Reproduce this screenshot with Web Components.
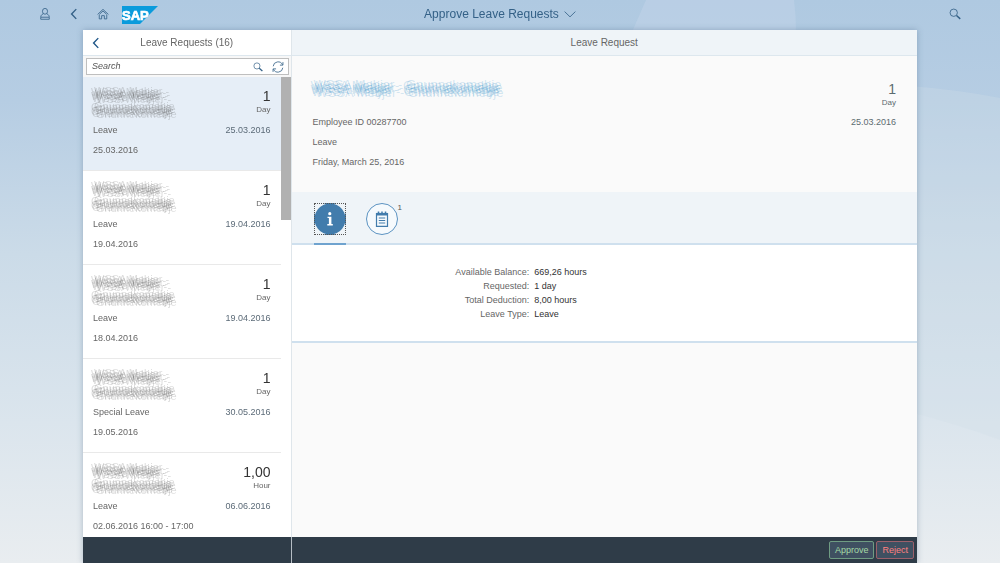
<!DOCTYPE html>
<html lang="en">
<head>
<meta charset="utf-8">
<meta name="viewport" content="width=device-width, initial-scale=1">
<title>Approve Leave Requests</title>
<style>
  html, body { height: 100%; margin: 0; }
  body { font-family: "Liberation Sans", Arial, sans-serif; font-size: 9px; line-height: 12px; color: #666; }
</style>
</head>
<body>
<leave-app></leave-app>
<script>
const define = (name, html, setup) => {
  const template = document.createElement('template');
  template.innerHTML = html;
  customElements.define(name, class extends HTMLElement {
    constructor() {
      super();
      this.attachShadow({ mode: 'open' }).append(template.content.cloneNode(true));
    }
    connectedCallback() { if (setup) setup(this, this.shadowRoot); }
  });
};

const ICONS = {
  user: '<ellipse cx="8" cy="4.400" rx="3.400" ry="3.900"/><path d="M5.600 7.600C3.400 8.800 2.300 10.200 2.300 12.500V15h11.400v-2.500c0-2.300-1.100-3.700-3.300-4.900M2.500 12.300h11"/>',
  back: '<path d="M11 1.500 4.800 8l6.200 6.500" stroke-width="1.900"/>',
  home: '<path d="M.8 8.600 8 1.800l7.200 6.800M3 9v5.500h3.200v-4.300h3.600v4.300H13V9M3.200 8.400 8 4l4.800 4.400"/>',
  down: '<path d="M.8 4.800 8 11.800l7.200-7"/>',
  search: '<circle cx="6.300" cy="6.300" r="4.900"/><path d="m10 10 5 4.500" stroke-width="2"/>',
  refresh: '<path d="M1.600 7A6.500 6.500 0 0 1 14 5M14.400 9A6.500 6.500 0 0 1 2 11"/><path d="M14.600 1.500v4h-4M1.400 14.500v-4h4"/>',
  info: '<g fill="currentColor" stroke="none"><circle cx="7.800" cy="2.700" r="1.600"/><path d="M5.500 5.700h3.900v7.400h1.400v1.300H5.300v-1.300h1.600V7H5.500z"/></g>',
  notes: '<path d="M2.500 2.500h11v12.800h-11z" stroke-width="1.200"/><path d="M2.500 3.200h11" stroke-width="2.600"/><path d="M4.500.5v2M8 .5v2M11.500.5v2" stroke-width="1.500"/><path d="M4.800 7h6.400M4.800 9.500h6.400M4.800 12h6.400" stroke-width="1.200"/>'
};

define('ui-icon', `
  <style>
    :host { display: inline-block; width: 12px; height: 12px; flex: none; }
    svg { display: block; width: 100%; height: 100%; fill: none; stroke: currentColor; stroke-width: 1.1; overflow: visible; }
  </style>
  <svg viewBox="0 0 16 16" aria-hidden="true"></svg>`,
  (el, root) => { root.querySelector('svg').innerHTML = ICONS[el.getAttribute('name')]; });

define('brand-logo', `
  <style>
    :host { display: block; }
    svg { display: block; width: 36px; height: 18px; }
    text { font: bold 13px "Liberation Sans", Arial, sans-serif; fill: #fff; stroke: #fff; stroke-width: .7; }
  </style>
  <svg viewBox="0 0 36 18" role="img" aria-label="SAP">
    <path d="M0 0h36L18 18H0z" fill="#0a9bdc"/>
    <text x="0" y="14">SAP</text>
  </svg>`);

define('page-backdrop', `
  <style>
    :host { position: fixed; inset: 0; z-index: -1; }
    svg { display: block; width: 100%; height: 100%; }
  </style>
  <svg viewBox="0 0 1000 563" preserveAspectRatio="none" aria-hidden="true">
    <defs><linearGradient id="sky" x2="0" y2="1">
      <stop stop-color="#afc9e1"/><stop offset=".18" stop-color="#b6cde3"/><stop offset=".45" stop-color="#cbdbe8"/>
      <stop offset=".75" stop-color="#dbe5ed"/><stop offset="1" stop-color="#e9edf0"/>
    </linearGradient></defs>
    <path d="M0 0h1000v563H0z" fill="url(#sky)"/>
    <path d="M646 0h148q2 16 2 32H632z" fill="#bfd2e8" opacity=".6"/>
    <path d="M910 86q50 4 90 12v342q-40-15-90-28z" fill="#d0dfe9" opacity=".3"/>
  </svg>`);

define('shell-header', `
  <style>
    :host { display: grid; grid-template-columns: 1fr auto 1fr; align-items: center; box-sizing: border-box; height: 30px; padding-bottom: 2px; flex: none; color: #346187; }
    .left { display: flex; align-items: center; gap: 17px; padding-left: 39px; }
    button { border: 0; padding: 0; background: none; color: inherit; font: inherit; display: flex; align-items: center; }
    h1 { margin: 0; font-weight: 400; font-size: 12px; line-height: 16px; }
    h1 button { gap: 5px; }
    .right { justify-self: end; padding-right: 39px; }
    a { display: block; margin: 2px 0 0 -4px; }
  </style>
  <nav class="left">
    <button aria-label="User"><ui-icon name="user"></ui-icon></button>
    <button aria-label="Back"><ui-icon name="back"></ui-icon></button>
    <button aria-label="Home"><ui-icon name="home"></ui-icon></button>
    <a href="#" aria-label="SAP"><brand-logo></brand-logo></a>
  </nav>
  <h1><button>Approve Leave Requests <ui-icon name="down"></ui-icon></button></h1>
  <div class="right"><button aria-label="Search"><ui-icon name="search"></ui-icon></button></div>`);

/* A name made unreadable by several overlapping ghost copies. */
define('masked-name', `
  <style>
    :host { display: block; white-space: nowrap; color: rgba(85, 85, 85, .2); font-size: 11px; line-height: 15px;
      text-shadow: -2px -3px currentColor, 2px -1px currentColor, -1px 3px currentColor, 3px 4px currentColor, 1px -4px currentColor, -2px 1px currentColor; }
    :host([large]) { color: rgba(45, 140, 200, .2); font-size: 13px; line-height: 16px; }
  </style>
  <slot></slot>`);

define('leave-item', `
  <style>
    :host { display: block; box-sizing: border-box; height: 94px; padding: 11px 10px 0; border-bottom: 1px solid #e9e9e9; flex: none; }
    :host([selected]) { background: #e6eef7; }
    .top, .row { display: flex; justify-content: space-between; }
    .top { height: 36px; }
    .num { text-align: right; color: #333; font-size: 14px; line-height: 16px; }
    .unit { display: block; font-size: 8px; line-height: 12px; color: #666; }
    .row { line-height: 12px; }
    .when { margin-top: 8px; }
    ::slotted([slot=date]) { color: #5c6b78; }
  </style>
  <div class="top">
    <div><masked-name>WSSA Mebjer -</masked-name><masked-name>Gnunnekomebje</masked-name></div>
    <div class="num"><slot name="amount"></slot><span class="unit"><slot name="unit"></slot></span></div>
  </div>
  <div class="row"><slot name="type"></slot><slot name="date"></slot></div>
  <div class="when"><slot name="when"></slot></div>`);

define('pane-header', `
  <style>
    :host { display: grid; grid-template-columns: 22px 1fr 22px; align-items: center; box-sizing: border-box; height: 26px;
      flex: none; border-bottom: 1px solid #dde7ee; background: var(--bar, #fff); }
    h2 { margin: 0; grid-column: 2; text-align: center; font-size: 10px; line-height: 14px; font-weight: 400; color: #666; }
  </style>
  <slot name="lead"></slot><h2><slot></slot></h2>`);

define('search-field', `
  <style>
    :host { display: block; padding: 2px 2px 2px 3px; background: #f7f7f7; flex: none; }
    form { display: flex; align-items: center; gap: 9px; box-sizing: border-box; height: 17px; padding: 0 4px 0 5px; border: 1px solid #bfbfbf; background: #fff; color: #346187; }
    input { flex: 1; min-width: 0; border: 0; padding: 0; outline: 0; background: none; font: italic 9px/13px "Liberation Sans", Arial, sans-serif; color: #333; }
    input::placeholder { color: #555; opacity: 1; }
    button { display: flex; border: 0; padding: 0; background: none; color: inherit; }
    .find ui-icon { width: 10px; height: 10px; }
  </style>
  <form role="search">
    <input type="text" placeholder="Search" aria-label="Search">
    <button class="find" type="button" aria-label="Search"><ui-icon name="search"></ui-icon></button>
    <button type="button" aria-label="Refresh"><ui-icon name="refresh"></ui-icon></button>
  </form>`);

const requests = [
  ['1', 'Day', 'Leave', '25.03.2016', '25.03.2016'],
  ['1', 'Day', 'Leave', '19.04.2016', '19.04.2016'],
  ['1', 'Day', 'Leave', '19.04.2016', '18.04.2016'],
  ['1', 'Day', 'Special Leave', '30.05.2016', '19.05.2016'],
  ['1,00', 'Hour', 'Leave', '06.06.2016', '02.06.2016 16:00 - 17:00']
];

define('request-list', `
  <style>
    :host { display: flex; flex-direction: column; min-height: 0; background: #fff; border-right: 1px solid #dfe6eb; }
    .scroll { display: grid; grid-template-columns: 1fr 10px; flex: 1; min-height: 0; overflow: hidden; }
    .items { display: flex; flex-direction: column; min-width: 0; min-height: 0; overflow: hidden; }
    .thumb { height: 31%; background: #b1b1b1; }
    button { display: flex; border: 0; padding: 0 0 0 7px; background: none; color: #1f5688; }
  </style>
  <pane-header><button slot="lead" aria-label="Back"><ui-icon name="back"></ui-icon></button>Leave Requests (16)</pane-header>
  <search-field></search-field>
  <div class="scroll"><div class="items">${requests.map(([n, u, t, d, w], i) => `
    <leave-item ${i ? '' : 'selected'}><span slot="amount">${n}</span><span slot="unit">${u}</span><span slot="type">${t}</span><span slot="date">${d}</span><span slot="when">${w}</span></leave-item>`).join('')}
  </div><div class="thumb"></div></div>`);

define('object-header', `
  <style>
    :host { display: flex; justify-content: space-between; box-sizing: border-box; height: 136px; padding: 25px 21px 0; flex: none; }
    a { display: block; text-decoration: none; height: 35px; }
    p { margin: 0 0 8px; }
    .right { text-align: right; color: #5c6b70; }
    .num { font-size: 14px; line-height: 16px; }
    .unit { font-size: 8px; line-height: 12px; margin-bottom: 7px; }
  </style>
  <div>
    <a href="#"><masked-name large>WSSA Mebjer - Gnunnekomebje</masked-name></a>
    <p>Employee ID 00287700</p><p>Leave</p><p>Friday, March 25, 2016</p>
  </div>
  <div class="right"><div class="num">1</div><div class="unit">Day</div><div>25.03.2016</div></div>`);

define('icon-tabs', `
  <style>
    :host { display: flex; gap: 20px; box-sizing: border-box; height: 53px; padding: 11px 22px 0; flex: none; background: #eff4f8; border-bottom: 2px solid #cfe0ee; }
    button { position: relative; width: 32px; height: 32px; box-sizing: border-box; padding: 0; border: 1px solid #5c93c2; border-radius: 50%; background: #f6fafd; color: #427cac; display: grid; place-items: center; }
    .tab { height: 40px; }
    .on { border-bottom: 2px solid #6fa3cf; }
    .on button { border: 1px dotted #555; border-radius: 0; background: radial-gradient(circle at center, #427cac 15px, transparent 16px); color: #fff; }
    .count { position: absolute; left: 31px; top: 0; font-size: 8px; line-height: 8px; color: #555; }
    ui-icon { width: 16px; height: 16px; }
  </style>
  <div class="tab on"><button role="tab" aria-selected="true" aria-label="Information"><ui-icon name="info"></ui-icon></button></div>
  <div class="tab"><button role="tab" aria-selected="false" aria-label="Notes"><ui-icon name="notes"></ui-icon><span class="count">1</span></button></div>`);

define('leave-facts', `
  <style>
    :host { display: block; box-sizing: border-box; height: 98px; padding: 20px 0 0; flex: none; background: #fff; border-bottom: 2px solid #cfe0ee; }
    dl { display: grid; grid-template-columns: 38% 1fr; column-gap: 5px; margin: 0; line-height: 14px; }
    dt { text-align: right; } dd { margin: 0; color: #333; }
  </style>
  <dl>
    <dt>Available Balance:</dt><dd>669,26 hours</dd>
    <dt>Requested:</dt><dd>1 day</dd>
    <dt>Total Deduction:</dt><dd>8,00 hours</dd>
    <dt>Leave Type:</dt><dd>Leave</dd>
  </dl>`);

define('detail-pane', `
  <style>
    :host { display: flex; flex-direction: column; min-width: 0; background: #fafafa; --bar: #eff4f8; }
  </style>
  <pane-header>Leave Request</pane-header>
  <object-header></object-header>
  <icon-tabs></icon-tabs>
  <leave-facts></leave-facts>`);

define('action-bar', `
  <style>
    :host { display: flex; align-items: center; justify-content: flex-end; gap: 2px; box-sizing: border-box; padding-right: 3px; background: #2f3c48; }
    button { box-sizing: border-box; height: 18px; padding: 0 5px; border: 1px solid; border-radius: 2px; background: #3f5061; font: 9px/14px "Liberation Sans", Arial, sans-serif; }
    .yes { color: #a5dba5; border-color: #6f9c83; } .no { color: #ff8080; border-color: #9c606b; }
  </style>
  <button class="yes">Approve</button><button class="no">Reject</button>`);

define('leave-app', `
  <style>
    :host { display: flex; flex-direction: column; height: 100vh; }
    main { flex: 1; min-height: 0; width: 83.4%; margin: 0 auto; display: grid; grid-template-columns: 25% 1fr; grid-template-rows: minmax(0, 1fr) 26px;
      box-shadow: 0 0 6px rgba(60, 90, 120, .35); }
    .foot { background: #2f3c48; border-right: 1px solid #b5bdc4; }
  </style>
  <page-backdrop></page-backdrop>
  <shell-header></shell-header>
  <main>
    <request-list></request-list><detail-pane></detail-pane>
    <div class="foot"></div><action-bar></action-bar>
  </main>`);
</script>
</body>
</html>
